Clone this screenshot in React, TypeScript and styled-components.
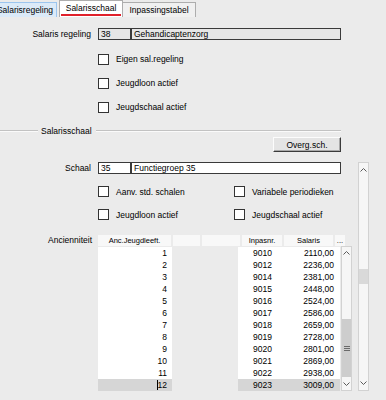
import styled, { createGlobalStyle } from 'styled-components';

const GlobalStyle = createGlobalStyle`
  html, body {
    margin: 0;
    padding: 0;
    background: #ebebeb;
  }
  body {
    font-family: 'Liberation Sans', Arial, sans-serif;
    font-size: 8.5px;
    color: #000;
  }
`;

const ancRows = [
  { anc: '1', nr: '9010', sal: '2110,00' },
  { anc: '2', nr: '9012', sal: '2236,00' },
  { anc: '3', nr: '9014', sal: '2381,00' },
  { anc: '4', nr: '9015', sal: '2448,00' },
  { anc: '5', nr: '9016', sal: '2524,00' },
  { anc: '6', nr: '9017', sal: '2586,00' },
  { anc: '7', nr: '9018', sal: '2659,00' },
  { anc: '8', nr: '9019', sal: '2728,00' },
  { anc: '9', nr: '9020', sal: '2801,00' },
  { anc: '10', nr: '9021', sal: '2869,00' },
  { anc: '11', nr: '9022', sal: '2938,00' },
  { anc: '12', nr: '9023', sal: '3009,00' },
];

function Chevron({ down }: { down?: boolean }) {
  return (
    <svg width="7" height="4" viewBox="0 0 7 4">
      <polyline
        points={down ? '0.5,0.5 3.5,3.5 6.5,0.5' : '0.5,3.5 3.5,0.5 6.5,3.5'}
        fill="none"
        stroke="#5a5a5a"
        strokeWidth="1"
      />
    </svg>
  );
}

function Grip() {
  return (
    <svg width="6" height="6" viewBox="0 0 6 6">
      <path d="M0 1.5H6M0 3.5H6M0 5.5H6" stroke="#6a6a6a" strokeWidth="1" />
    </svg>
  );
}

interface ScrollBarProps {
  height: number;
  arrow: number;
  thumbTop: number;
  thumbHeight: number;
  grip?: boolean;
}

function ScrollBar({ height, arrow, thumbTop, thumbHeight, grip }: ScrollBarProps) {
  return (
    <ScrollTrack style={{ height }}>
      <ArrowButton $h={arrow}>
        <Chevron />
      </ArrowButton>
      <TrackArea>
        <Thumb style={{ marginTop: thumbTop, height: thumbHeight }} $dark={grip}>
          {grip && <Grip />}
        </Thumb>
      </TrackArea>
      <ArrowButton $h={arrow}>
        <Chevron down />
      </ArrowButton>
    </ScrollTrack>
  );
}

function Check({ label }: { label: string }) {
  return (
    <CheckItem>
      <Box />
      <span>{label}</span>
    </CheckItem>
  );
}

export default function App() {
  return (
    <Window>
      <GlobalStyle />
      <TabBar>
        <Tab $kind="hover" $w={64}>Salarisregeling</Tab>
        <Tab $kind="active" $w={64} style={{ marginLeft: 2 }}>
          <ActiveLabel>Salarisschaal</ActiveLabel>
        </Tab>
        <Tab $kind="normal" $w={74} style={{ marginLeft: -1 }}>Inpassingstabel</Tab>
      </TabBar>

      <FieldRow style={{ marginTop: 11 }}>
        <Label>Salaris regeling</Label>
        <Field $w={33} $readonly>38</Field>
        <Field $w={210} $readonly>Gehandicaptenzorg</Field>
      </FieldRow>

      <CheckBlock style={{ marginTop: 7 }}>
        <CheckRow $h={24}>
          <Check label="Eigen sal.regeling" />
        </CheckRow>
        <CheckRow $h={24}>
          <Check label="Jeugdloon actief" />
        </CheckRow>
        <CheckRow $h={24}>
          <Check label="Jeugdschaal actief" />
        </CheckRow>
      </CheckBlock>

      <Separator>
        <Line style={{ width: 38, flex: 'none' }} />
        <SeparatorLabel>Salarisschaal</SeparatorLabel>
        <Line />
      </Separator>

      <ButtonRow>
        <Button>Overg.sch.</Button>
      </ButtonRow>

      <Lower>
        <MainCol>
          <FieldRow>
            <Label>Schaal</Label>
            <Field $w={33}>35</Field>
            <Field $w={210}>Functiegroep 35</Field>
          </FieldRow>

          <CheckBlock style={{ marginTop: 6 }}>
            <CheckRow $h={23}>
              <Check label="Aanv. std. schalen" />
              <Check label="Variabele periodieken" />
            </CheckRow>
            <CheckRow $h={23}>
              <Check label="Jeugdloon actief" />
              <Check label="Jeugdschaal actief" />
            </CheckRow>
          </CheckBlock>

          <GridRow>
            <Label $top>Ancienniteit</Label>
            <Grid>
              <HeaderRow>
                <HeadCell $w={73}>Anc.Jeugdleeft.</HeadCell>
                <HeadCell $w={27} />
                <HeadCell $w={38} />
                <HeadCell $w={40}>Inpasnr.</HeadCell>
                <HeadCell $w={49}>Salaris</HeadCell>
                <HeadCell $w={10}>...</HeadCell>
              </HeaderRow>
              <Body>
                <WhiteCol $w={74}>
                  {ancRows.map((r, i) => (
                    <DataRow key={r.anc} $selected={i === ancRows.length - 1}>
                      <NumCell $pad={5}>
                        {i === ancRows.length - 1 ? <Caret>{r.anc}</Caret> : r.anc}
                      </NumCell>
                    </DataRow>
                  ))}
                </WhiteCol>
                <Spacer />
                <WhiteCol $w={102}>
                  {ancRows.map((r, i) => (
                    <DataRow key={r.nr} $selected={i === ancRows.length - 1}>
                      <NumCell $w={40} $pad={6}>{r.nr}</NumCell>
                      <NumCell $pad={6}>{r.sal}</NumCell>
                    </DataRow>
                  ))}
                </WhiteCol>
                <ScrollBar height={145} arrow={12} thumbTop={60} thumbHeight={58} grip />
              </Body>
            </Grid>
          </GridRow>
        </MainCol>
        <ScrollBar height={229} arrow={14} thumbTop={92} thumbHeight={15} />
      </Lower>
    </Window>
  );
}

const Window = styled.div`
  width: 386px;
  height: 400px;
  overflow: hidden;
  background: #ebebeb;
  display: flex;
  flex-direction: column;
`;

const TabBar = styled.div`
  display: flex;
  align-items: flex-end;
  height: 17px;
  margin-left: -7px;
  flex: none;
`;

const Tab = styled.div<{ $kind: 'hover' | 'active' | 'normal'; $w: number }>`
  box-sizing: border-box;
  width: ${(p) => p.$w}px;
  height: ${(p) => (p.$kind === 'active' ? 17 : 15)}px;
  border: 1px solid #adadad;
  border-bottom: none;
  display: flex;
  align-items: center;
  justify-content: center;
  white-space: nowrap;
  background: ${(p) => (p.$kind === 'hover' ? '#dbeaf8' : p.$kind === 'active' ? '#ffffff' : '#f0f0f0')};
  ${(p) => p.$kind === 'hover' && 'border-color: #9cc5ee;'}
  ${(p) => p.$kind === 'active' && 'align-items: flex-start; padding: 0 1px;'}
`;

const ActiveLabel = styled.div`
  box-sizing: border-box;
  width: 100%;
  height: 15px;
  display: flex;
  align-items: center;
  justify-content: center;
  border-bottom: 2px solid #e0202a;
`;

const FieldRow = styled.div`
  display: flex;
  align-items: center;
  height: 12px;
  flex: none;
`;

const Label = styled.div<{ $top?: boolean }>`
  box-sizing: border-box;
  width: 98px;
  padding-right: ${(p) => (p.$top ? 6 : 7)}px;
  text-align: right;
  white-space: nowrap;
  flex: none;
  ${(p) => p.$top && 'line-height: 10px; padding-top: 0;'}
`;

const Field = styled.div<{ $w: number; $readonly?: boolean }>`
  box-sizing: border-box;
  width: ${(p) => p.$w}px;
  height: 12px;
  border: 1px solid #3a3a3a;
  background: ${(p) => (p.$readonly ? '#e6e6e6' : '#ffffff')};
  padding-left: 2px;
  line-height: 10px;
  white-space: nowrap;
  overflow: hidden;
  flex: none;
`;

const CheckBlock = styled.div`
  display: flex;
  flex-direction: column;
`;

const CheckRow = styled.div<{ $h: number }>`
  display: grid;
  grid-template-columns: 136px auto;
  align-items: center;
  height: ${(p) => p.$h}px;
  padding-left: 98px;
`;

const CheckItem = styled.div`
  display: flex;
  align-items: center;
  gap: 7px;
  white-space: nowrap;
`;

const Box = styled.div`
  box-sizing: border-box;
  width: 11px;
  height: 11px;
  border: 1px solid #333;
  background: #fff;
  flex: none;
`;

const Separator = styled.div`
  display: flex;
  align-items: center;
  width: 341px;
  height: 13px;
  margin-top: 5px;
  flex: none;
`;

const Line = styled.div`
  flex: 1;
  height: 0;
  border-top: 1px solid #c2c2c2;
  border-bottom: 1px solid #fafafa;
`;

const SeparatorLabel = styled.span`
  padding: 0 4px 0 3px;
  white-space: nowrap;
`;

const ButtonRow = styled.div`
  display: flex;
  justify-content: flex-end;
  width: 341px;
  height: 15px;
  flex: none;
`;

const Button = styled.div`
  box-sizing: border-box;
  width: 68px;
  height: 15px;
  background: #e4e4e4;
  border: 1px solid;
  border-color: #fcfcfc #3a3a3a #3a3a3a #fcfcfc;
  box-shadow: inset -1px -1px 0 #a8a8a8;
  display: flex;
  align-items: center;
  justify-content: center;
`;

const Lower = styled.div`
  display: flex;
  gap: 17px;
  margin-top: 10px;
  align-items: flex-start;
`;

const MainCol = styled.div`
  width: 341px;
  display: flex;
  flex-direction: column;
`;

const GridRow = styled.div`
  display: flex;
  align-items: flex-start;
  margin-top: 9px;
`;

const Grid = styled.div`
  display: flex;
  flex-direction: column;
`;

const HeaderRow = styled.div`
  display: flex;
  gap: 2px;
  height: 11px;
`;

const HeadCell = styled.div<{ $w: number }>`
  width: ${(p) => p.$w}px;
  height: 11px;
  background: #f8f8f8;
  font-size: 7.5px;
  line-height: 11px;
  text-align: center;
  white-space: nowrap;
  overflow: hidden;
`;

const Body = styled.div`
  display: flex;
  align-items: flex-start;
  gap: 1px;
  margin-top: 0;
`;

const WhiteCol = styled.div<{ $w: number }>`
  width: ${(p) => p.$w}px;
  background: #fff;
  display: flex;
  flex-direction: column;
  margin-top: 1px;
`;

const Spacer = styled.div`
  width: 64px;
`;

const DataRow = styled.div<{ $selected?: boolean }>`
  display: flex;
  height: 12px;
  align-items: center;
  background: ${(p) => (p.$selected ? '#d6d6d6' : 'transparent')};
`;

const NumCell = styled.div<{ $w?: number; $pad: number }>`
  box-sizing: border-box;
  ${(p) => (p.$w ? `width: ${p.$w}px;` : 'flex: 1;')}
  padding-right: ${(p) => p.$pad}px;
  text-align: right;
  white-space: nowrap;
`;

const Caret = styled.span`
  border-left: 1px solid #000;
  padding-left: 0;
`;

const ScrollTrack = styled.div`
  box-sizing: border-box;
  width: 11px;
  background: #f6f6f6;
  border: 1px solid #d2d2d2;
  display: flex;
  flex-direction: column;
  flex: none;
`;

const ArrowButton = styled.div<{ $h: number }>`
  height: ${(p) => p.$h}px;
  display: flex;
  align-items: center;
  justify-content: center;
  flex: none;
`;

const TrackArea = styled.div`
  flex: 1;
  display: flex;
  flex-direction: column;
`;

const Thumb = styled.div<{ $dark?: boolean }>`
  background: ${(p) => (p.$dark ? '#cdcdcd' : '#d9d9d9')};
  display: flex;
  align-items: center;
  justify-content: center;
`;
